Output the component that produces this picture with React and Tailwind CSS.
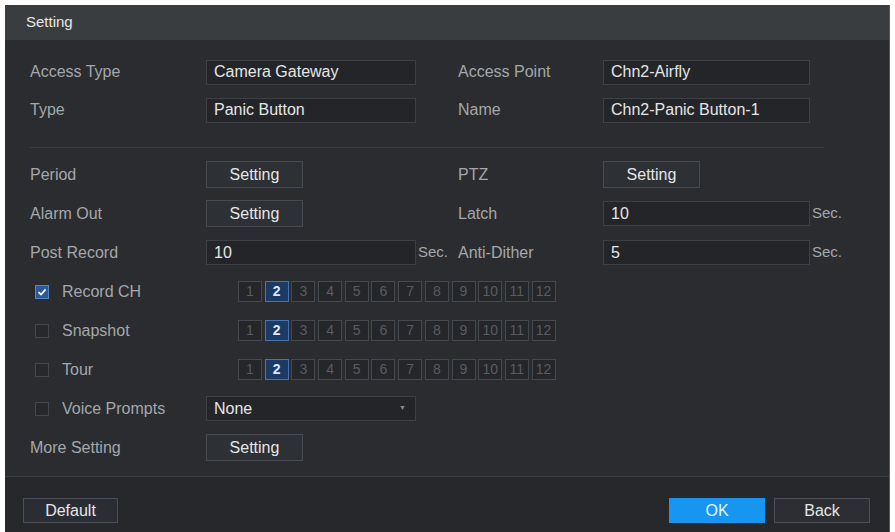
import { useState } from 'react';

const CHANNELS = [1, 2, 3, 4, 5, 6, 7, 8, 9, 10, 11, 12];

function Field({ value, wide = true, suffix, select }) {
  return (
    <div className="flex items-center">
      <div className={`${wide ? 'w-[210px]' : 'w-[207px]'} h-[25px] flex items-center justify-between px-[7px] bg-[#232528] border border-[#3d4044] text-[16px] text-[#e6e6e6]`}>
        <span>{value}</span>
        {select && <span className="text-[7px] text-[#8a8d92] mr-[2px]">▼</span>}
      </div>
      {suffix && <span className="ml-[2px] text-[15px] text-[#a4a7ab]">{suffix}</span>}
    </div>
  );
}

function SetBtn() {
  return (
    <button className="w-[97px] h-[27px] bg-[#2d3034] border border-[#474a4f] text-[16px] text-[#e6e6e6]">
      Setting
    </button>
  );
}

function Check({ on, label }) {
  return (
    <div className="flex items-center">
      <span className={`ml-[5px] w-[14px] h-[14px] flex items-center justify-center border ${on ? 'bg-[#2a5a98] border-[#5a86c0]' : 'bg-[#26282b] border-[#44474c]'}`}>
        {on && (
          <svg width="10" height="10" viewBox="0 0 10 10">
            <path d="M1.5 5.2 L4 7.6 L8.6 2.4" fill="none" stroke="#ffffff" strokeWidth="1.6" />
          </svg>
        )}
      </span>
      <span className="ml-[13px]">{label}</span>
    </div>
  );
}

function Channels({ picked }) {
  return (
    <div className="ml-[32px] flex gap-[2.7px]">
      {CHANNELS.map((n) => (
        <div
          key={n}
          className={`w-[24px] h-[21px] flex items-center justify-center text-[14px] border ${
            n === picked
              ? 'bg-[#1c3a66] border-[#4a74b0] text-[#dbe7ff] font-bold'
              : 'bg-[#24262a] border-[#45484d] text-[#595c61]'
          }`}
        >
          {n}
        </div>
      ))}
    </div>
  );
}

function Row({ left, control, rightLabel, rightControl, h = 'h-[39px]' }) {
  return (
    <div className={`flex items-center ${h}`}>
      <div className="w-[428px] flex items-center">
        <div className="w-[176px]">{left}</div>
        {control}
      </div>
      {rightLabel !== undefined && (
        <div className="flex items-center">
          <div className="w-[145px]">{rightLabel}</div>
          {rightControl}
        </div>
      )}
    </div>
  );
}

export default function App() {
  const [recordCh] = useState(2);

  return (
    <div className="w-[895px] h-[532px] bg-white pt-[5px] px-[5px] overflow-hidden" style={{ fontFamily: '"Liberation Sans", Arial, sans-serif' }}>
      <div className="h-full flex flex-col bg-[#2a2c2f] border-r border-[#55585c]">
        <div className="h-[35px] flex items-center px-[21px] bg-[#3a3d40] text-[15px] text-[#e6e6e6]">
          Setting
        </div>

        <div className="flex-1 px-[25px] pt-[13px] text-[16px] text-[#a4a7ab]">
          <Row h="h-[38px]" left="Access Type" control={<Field value="Camera Gateway" />} rightLabel="Access Point" rightControl={<Field value="Chn2-Airfly" wide={false} />} />
          <Row h="h-[38px]" left="Type" control={<Field value="Panic Button" />} rightLabel="Name" rightControl={<Field value="Chn2-Panic Button-1" wide={false} />} />

          <div className="mt-[18px] mb-[7px] mr-[40px] h-px bg-[#3a3d41]" />

          <Row left="Period" control={<SetBtn />} rightLabel="PTZ" rightControl={<SetBtn />} />
          <Row left="Alarm Out" control={<SetBtn />} rightLabel="Latch" rightControl={<Field value="10" wide={false} suffix="Sec." />} />
          <Row left="Post Record" control={<Field value="10" suffix="Sec." />} rightLabel="Anti-Dither" rightControl={<Field value="5" wide={false} suffix="Sec." />} />

          <div className="flex items-center h-[39px]">
            <div className="w-[176px]"><Check on label="Record CH" /></div>
            <Channels picked={recordCh} />
          </div>
          <div className="flex items-center h-[39px]">
            <div className="w-[176px]"><Check label="Snapshot" /></div>
            <Channels picked={2} />
          </div>
          <div className="flex items-center h-[39px]">
            <div className="w-[176px]"><Check label="Tour" /></div>
            <Channels picked={2} />
          </div>

          <Row left={<Check label="Voice Prompts" />} control={<Field value="None" select />} />
          <Row left="More Setting" control={<SetBtn />} />
        </div>

        <div className="h-[56px] flex items-start justify-between pt-[21px] pl-[18px] pr-[19px] border-t border-[#3a3d41] bg-[#26282b] text-[16px]">
          <button className="w-[95px] h-[25px] bg-[#2b2d35] border border-[#4c4f58] text-[#e6e6e6]">Default</button>
          <div className="flex gap-[9px]">
            <button className="w-[96px] h-[25px] bg-[#1696f0] text-[#e8f4ff]">OK</button>
            <button className="w-[96px] h-[25px] bg-[#2c2e33] border border-[#4c4f55] text-[#e6e6e6]">Back</button>
          </div>
        </div>
      </div>
    </div>
  );
}
